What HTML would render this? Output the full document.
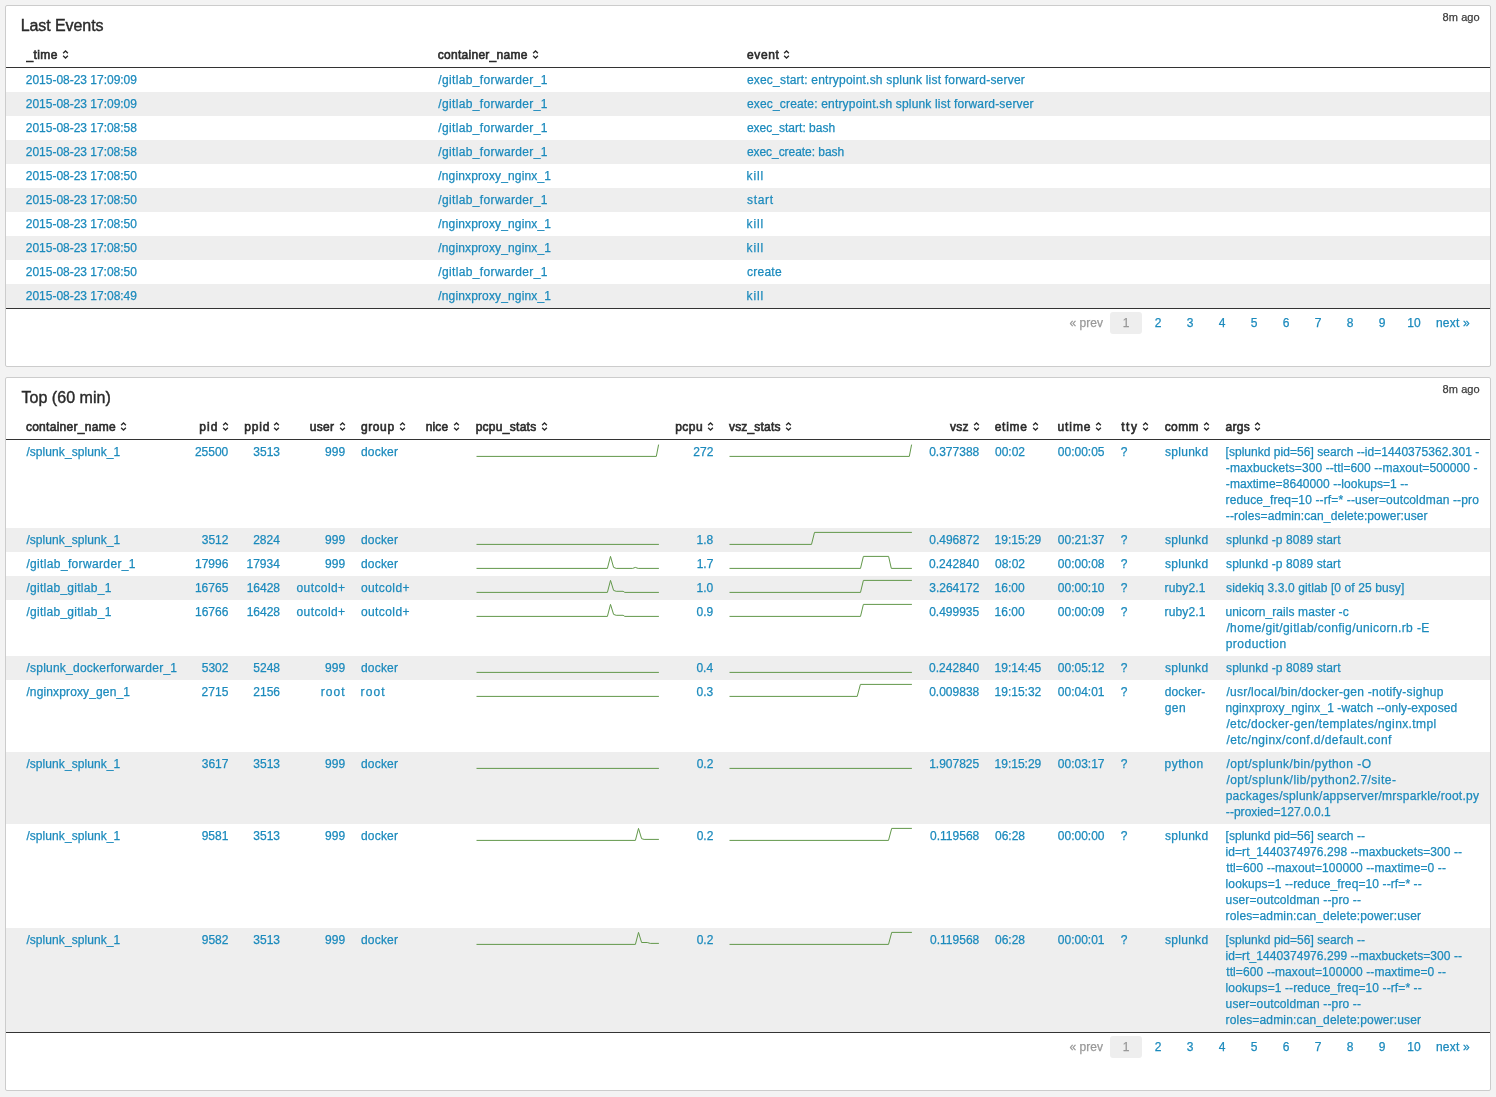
<!DOCTYPE html>
<html><head><meta charset="utf-8"><title>Docker</title>
<style>
html,body{margin:0;padding:0}
body{width:1496px;height:1097px;background:#f3f3f3;position:relative;overflow:hidden;font-family:"Liberation Sans",sans-serif;}
#pg{position:absolute;left:0;top:0;width:1496px;height:1097px;overflow:hidden;will-change:transform}
#pg div,#pg svg,#pg span{position:absolute}
.p{background:#fff;border:1px solid #cccccc;border-radius:2px;box-sizing:border-box}
span{white-space:pre;line-height:16px;height:16px;display:block;-webkit-text-stroke:0.25px}
.h{-webkit-text-stroke:0.6px #2b2b2b;color:#2b2b2b !important}
.t{-webkit-text-stroke:0.4px #2a2a2a;color:#2a2a2a !important}
#sp path{fill:none;stroke:#62984a;stroke-width:1}
</style></head><body><div id="pg">
<div class="p" style="left:5px;top:5px;width:1486px;height:362px"></div>
<div class="p" style="left:5px;top:377px;width:1486px;height:714px"></div>
<div style="left:6px;top:92px;width:1484px;height:24px;background:#eeeeee;"></div>
<div style="left:6px;top:140px;width:1484px;height:24px;background:#eeeeee;"></div>
<div style="left:6px;top:188px;width:1484px;height:24px;background:#eeeeee;"></div>
<div style="left:6px;top:236px;width:1484px;height:24px;background:#eeeeee;"></div>
<div style="left:6px;top:284px;width:1484px;height:24px;background:#eeeeee;"></div>
<div style="left:6px;top:67px;width:1484px;height:1px;background:#333;"></div>
<div style="left:6px;top:308px;width:1484px;height:1px;background:#333;"></div>
<div style="left:1110px;top:312px;width:32px;height:22px;background:#eeeeee;border-radius:3px"></div>
<div style="left:6px;top:439px;width:1484px;height:1px;background:#333;"></div>
<div style="left:6px;top:528px;width:1484px;height:24px;background:#eeeeee;"></div>
<div style="left:6px;top:576px;width:1484px;height:24px;background:#eeeeee;"></div>
<div style="left:6px;top:656px;width:1484px;height:24px;background:#eeeeee;"></div>
<div style="left:6px;top:752px;width:1484px;height:72px;background:#eeeeee;"></div>
<div style="left:6px;top:928px;width:1484px;height:104px;background:#eeeeee;"></div>
<div style="left:6px;top:1032px;width:1484px;height:1px;background:#333;"></div>
<div style="left:1110px;top:1036px;width:32px;height:22px;background:#eeeeee;border-radius:3px"></div>
<svg id="sp" style="left:0;top:0" width="1496" height="1097" viewBox="0 0 1496 1097"><path d="M476.5 456.4 L656.3 456.4 L658.6 444.6"/><path d="M729.5 456.4 L909.3 456.4 L911.6 444.6"/><path d="M476.5 544.4 L658.9 544.4"/><path d="M729.5 544.4 L811.5 544.4 L814.5 532.4 L911.9 532.4"/><path d="M476.5 568.4 L607.4 568.4 L610.5 556.4 L613.6 567.4 L616.2 568.4 L632.7 568.4 L635.3 567.4 L638.2 568.4 L658.9 568.4"/><path d="M729.5 568.4 L860.5 568.4 L863.4 556.4 L888.6 556.4 L891.3 568.4 L911.9 568.4"/><path d="M476.5 592.4 L607.4 592.4 L610.5 580.4 L613.6 590.4 L616.2 591.3 L623.1 591.3 L624.8 592.4 L658.9 592.4"/><path d="M729.5 592.4 L860.5 592.4 L863.4 580.4 L911.9 580.4"/><path d="M476.5 616.4 L607.4 616.4 L610.5 604.4 L613.6 614.4 L616.2 615.3 L623.1 615.3 L624.8 616.4 L658.9 616.4"/><path d="M729.5 616.4 L860.5 616.4 L863.4 604.4 L911.9 604.4"/><path d="M476.5 672.4 L658.9 672.4"/><path d="M729.5 672.4 L911.9 672.4"/><path d="M476.5 696.4 L658.9 696.4"/><path d="M729.5 696.4 L857.2 696.4 L860.4 684.4 L911.9 684.4"/><path d="M476.5 768.4 L658.9 768.4"/><path d="M729.5 768.4 L911.9 768.4"/><path d="M476.5 840.4 L635.4 840.4 L638.5 828.4 L641.6 838.7 L644.1 839.4 L658.9 839.4"/><path d="M729.5 840.4 L888.5 840.4 L891.7 828.4 L911.9 828.4"/><path d="M476.5 944.4 L635.4 944.4 L638.5 932.4 L641.6 942.5 L647.2 942.5 L650.3 943.4 L658.9 943.4"/><path d="M729.5 944.4 L888.5 944.4 L891.7 932.4 L911.9 932.4"/></svg>
<svg style="left:61.90px;top:49.00px" width="7" height="11" viewBox="0 0 7 11"><path d="M1.1 4.3L3.5 2.0L5.9 4.3M1.1 6.7L3.5 9.0L5.9 6.7" fill="none" stroke="#2b2b2b" stroke-width="1.3"/></svg>
<svg style="left:532.25px;top:49.00px" width="7" height="11" viewBox="0 0 7 11"><path d="M1.1 4.3L3.5 2.0L5.9 4.3M1.1 6.7L3.5 9.0L5.9 6.7" fill="none" stroke="#2b2b2b" stroke-width="1.3"/></svg>
<svg style="left:783.10px;top:49.00px" width="7" height="11" viewBox="0 0 7 11"><path d="M1.1 4.3L3.5 2.0L5.9 4.3M1.1 6.7L3.5 9.0L5.9 6.7" fill="none" stroke="#2b2b2b" stroke-width="1.3"/></svg>
<svg style="left:120.05px;top:421.00px" width="7" height="11" viewBox="0 0 7 11"><path d="M1.1 4.3L3.5 2.0L5.9 4.3M1.1 6.7L3.5 9.0L5.9 6.7" fill="none" stroke="#2b2b2b" stroke-width="1.3"/></svg>
<svg style="left:221.80px;top:421.00px" width="7" height="11" viewBox="0 0 7 11"><path d="M1.1 4.3L3.5 2.0L5.9 4.3M1.1 6.7L3.5 9.0L5.9 6.7" fill="none" stroke="#2b2b2b" stroke-width="1.3"/></svg>
<svg style="left:273.45px;top:421.00px" width="7" height="11" viewBox="0 0 7 11"><path d="M1.1 4.3L3.5 2.0L5.9 4.3M1.1 6.7L3.5 9.0L5.9 6.7" fill="none" stroke="#2b2b2b" stroke-width="1.3"/></svg>
<svg style="left:338.60px;top:421.00px" width="7" height="11" viewBox="0 0 7 11"><path d="M1.1 4.3L3.5 2.0L5.9 4.3M1.1 6.7L3.5 9.0L5.9 6.7" fill="none" stroke="#2b2b2b" stroke-width="1.3"/></svg>
<svg style="left:398.50px;top:421.00px" width="7" height="11" viewBox="0 0 7 11"><path d="M1.1 4.3L3.5 2.0L5.9 4.3M1.1 6.7L3.5 9.0L5.9 6.7" fill="none" stroke="#2b2b2b" stroke-width="1.3"/></svg>
<svg style="left:453.00px;top:421.00px" width="7" height="11" viewBox="0 0 7 11"><path d="M1.1 4.3L3.5 2.0L5.9 4.3M1.1 6.7L3.5 9.0L5.9 6.7" fill="none" stroke="#2b2b2b" stroke-width="1.3"/></svg>
<svg style="left:541.30px;top:421.00px" width="7" height="11" viewBox="0 0 7 11"><path d="M1.1 4.3L3.5 2.0L5.9 4.3M1.1 6.7L3.5 9.0L5.9 6.7" fill="none" stroke="#2b2b2b" stroke-width="1.3"/></svg>
<svg style="left:706.75px;top:421.00px" width="7" height="11" viewBox="0 0 7 11"><path d="M1.1 4.3L3.5 2.0L5.9 4.3M1.1 6.7L3.5 9.0L5.9 6.7" fill="none" stroke="#2b2b2b" stroke-width="1.3"/></svg>
<svg style="left:784.95px;top:421.00px" width="7" height="11" viewBox="0 0 7 11"><path d="M1.1 4.3L3.5 2.0L5.9 4.3M1.1 6.7L3.5 9.0L5.9 6.7" fill="none" stroke="#2b2b2b" stroke-width="1.3"/></svg>
<svg style="left:972.70px;top:421.00px" width="7" height="11" viewBox="0 0 7 11"><path d="M1.1 4.3L3.5 2.0L5.9 4.3M1.1 6.7L3.5 9.0L5.9 6.7" fill="none" stroke="#2b2b2b" stroke-width="1.3"/></svg>
<svg style="left:1032.25px;top:421.00px" width="7" height="11" viewBox="0 0 7 11"><path d="M1.1 4.3L3.5 2.0L5.9 4.3M1.1 6.7L3.5 9.0L5.9 6.7" fill="none" stroke="#2b2b2b" stroke-width="1.3"/></svg>
<svg style="left:1095.25px;top:421.00px" width="7" height="11" viewBox="0 0 7 11"><path d="M1.1 4.3L3.5 2.0L5.9 4.3M1.1 6.7L3.5 9.0L5.9 6.7" fill="none" stroke="#2b2b2b" stroke-width="1.3"/></svg>
<svg style="left:1141.50px;top:421.00px" width="7" height="11" viewBox="0 0 7 11"><path d="M1.1 4.3L3.5 2.0L5.9 4.3M1.1 6.7L3.5 9.0L5.9 6.7" fill="none" stroke="#2b2b2b" stroke-width="1.3"/></svg>
<svg style="left:1203.20px;top:421.00px" width="7" height="11" viewBox="0 0 7 11"><path d="M1.1 4.3L3.5 2.0L5.9 4.3M1.1 6.7L3.5 9.0L5.9 6.7" fill="none" stroke="#2b2b2b" stroke-width="1.3"/></svg>
<svg style="left:1254.00px;top:421.00px" width="7" height="11" viewBox="0 0 7 11"><path d="M1.1 4.3L3.5 2.0L5.9 4.3M1.1 6.7L3.5 9.0L5.9 6.7" fill="none" stroke="#2b2b2b" stroke-width="1.3"/></svg>
<span class="t" style="top:17.50px;font-size:16px;color:#333;letter-spacing:-0.072px;left:20.69px;">Last Events</span>
<span style="top:9.00px;font-size:11px;color:#3c3c3c;letter-spacing:0.087px;right:16.25px;">8m ago</span>
<span class="h" style="top:47.00px;font-size:12px;color:#333;letter-spacing:0.402px;left:26.48px;">_time</span>
<span class="h" style="top:47.00px;font-size:12px;color:#333;letter-spacing:0.275px;left:437.79px;">container_name</span>
<span class="h" style="top:47.00px;font-size:12px;color:#333;letter-spacing:0.585px;left:747.09px;">event</span>
<span style="top:72.00px;font-size:12px;color:#1b8abd;letter-spacing:-0.015px;left:25.80px;">2015-08-23 17:09:09</span>
<span style="top:72.00px;font-size:12px;color:#1b8abd;letter-spacing:0.353px;left:438.30px;">/gitlab_forwarder_1</span>
<span style="top:72.00px;font-size:12px;color:#1b8abd;letter-spacing:0.205px;left:746.89px;">exec_start: entrypoint.sh splunk list forward-server</span>
<span style="top:96.00px;font-size:12px;color:#1b8abd;letter-spacing:-0.015px;left:25.80px;">2015-08-23 17:09:09</span>
<span style="top:96.00px;font-size:12px;color:#1b8abd;letter-spacing:0.353px;left:438.30px;">/gitlab_forwarder_1</span>
<span style="top:96.00px;font-size:12px;color:#1b8abd;letter-spacing:0.178px;left:746.89px;">exec_create: entrypoint.sh splunk list forward-server</span>
<span style="top:120.00px;font-size:12px;color:#1b8abd;letter-spacing:-0.017px;left:25.80px;">2015-08-23 17:08:58</span>
<span style="top:120.00px;font-size:12px;color:#1b8abd;letter-spacing:0.353px;left:438.30px;">/gitlab_forwarder_1</span>
<span style="top:120.00px;font-size:12px;color:#1b8abd;letter-spacing:0.015px;left:746.89px;">exec_start: bash</span>
<span style="top:144.00px;font-size:12px;color:#1b8abd;letter-spacing:-0.017px;left:25.80px;">2015-08-23 17:08:58</span>
<span style="top:144.00px;font-size:12px;color:#1b8abd;letter-spacing:0.353px;left:438.30px;">/gitlab_forwarder_1</span>
<span style="top:144.00px;font-size:12px;color:#1b8abd;letter-spacing:-0.048px;left:746.89px;">exec_create: bash</span>
<span style="top:168.00px;font-size:12px;color:#1b8abd;letter-spacing:-0.020px;left:25.80px;">2015-08-23 17:08:50</span>
<span style="top:168.00px;font-size:12px;color:#1b8abd;letter-spacing:0.139px;left:438.30px;">/nginxproxy_nginx_1</span>
<span style="top:168.00px;font-size:12px;color:#1b8abd;letter-spacing:0.870px;left:746.59px;">kill</span>
<span style="top:192.00px;font-size:12px;color:#1b8abd;letter-spacing:-0.020px;left:25.80px;">2015-08-23 17:08:50</span>
<span style="top:192.00px;font-size:12px;color:#1b8abd;letter-spacing:0.353px;left:438.30px;">/gitlab_forwarder_1</span>
<span style="top:192.00px;font-size:12px;color:#1b8abd;letter-spacing:0.670px;left:747.07px;">start</span>
<span style="top:216.00px;font-size:12px;color:#1b8abd;letter-spacing:-0.020px;left:25.80px;">2015-08-23 17:08:50</span>
<span style="top:216.00px;font-size:12px;color:#1b8abd;letter-spacing:0.139px;left:438.30px;">/nginxproxy_nginx_1</span>
<span style="top:216.00px;font-size:12px;color:#1b8abd;letter-spacing:0.870px;left:746.59px;">kill</span>
<span style="top:240.00px;font-size:12px;color:#1b8abd;letter-spacing:-0.020px;left:25.80px;">2015-08-23 17:08:50</span>
<span style="top:240.00px;font-size:12px;color:#1b8abd;letter-spacing:0.139px;left:438.30px;">/nginxproxy_nginx_1</span>
<span style="top:240.00px;font-size:12px;color:#1b8abd;letter-spacing:0.870px;left:746.59px;">kill</span>
<span style="top:264.00px;font-size:12px;color:#1b8abd;letter-spacing:-0.020px;left:25.80px;">2015-08-23 17:08:50</span>
<span style="top:264.00px;font-size:12px;color:#1b8abd;letter-spacing:0.353px;left:438.30px;">/gitlab_forwarder_1</span>
<span style="top:264.00px;font-size:12px;color:#1b8abd;letter-spacing:0.277px;left:746.89px;">create</span>
<span style="top:288.00px;font-size:12px;color:#1b8abd;letter-spacing:-0.015px;left:25.80px;">2015-08-23 17:08:49</span>
<span style="top:288.00px;font-size:12px;color:#1b8abd;letter-spacing:0.139px;left:438.30px;">/nginxproxy_nginx_1</span>
<span style="top:288.00px;font-size:12px;color:#1b8abd;letter-spacing:0.870px;left:746.59px;">kill</span>
<span style="top:315.00px;font-size:12px;color:#999;letter-spacing:0.034px;left:1069.51px;">« prev</span>
<span style="top:315.00px;font-size:12px;color:#999;left:1076.00px;width:100px;text-align:center;">1</span>
<span style="top:315.00px;font-size:12px;color:#1b8abd;left:1108.00px;width:100px;text-align:center;">2</span>
<span style="top:315.00px;font-size:12px;color:#1b8abd;left:1140.00px;width:100px;text-align:center;">3</span>
<span style="top:315.00px;font-size:12px;color:#1b8abd;left:1172.00px;width:100px;text-align:center;">4</span>
<span style="top:315.00px;font-size:12px;color:#1b8abd;left:1204.00px;width:100px;text-align:center;">5</span>
<span style="top:315.00px;font-size:12px;color:#1b8abd;left:1236.00px;width:100px;text-align:center;">6</span>
<span style="top:315.00px;font-size:12px;color:#1b8abd;left:1268.00px;width:100px;text-align:center;">7</span>
<span style="top:315.00px;font-size:12px;color:#1b8abd;left:1300.00px;width:100px;text-align:center;">8</span>
<span style="top:315.00px;font-size:12px;color:#1b8abd;left:1332.00px;width:100px;text-align:center;">9</span>
<span style="top:315.00px;font-size:12px;color:#1b8abd;left:1364.00px;width:100px;text-align:center;">10</span>
<span style="top:315.00px;font-size:12px;color:#1b8abd;letter-spacing:0.216px;left:1435.90px;">next »</span>
<span class="t" style="top:389.50px;font-size:16px;color:#333;letter-spacing:0.039px;left:21.44px;">Top (60 min)</span>
<span style="top:381.00px;font-size:11px;color:#3c3c3c;letter-spacing:0.087px;right:16.25px;">8m ago</span>
<span class="h" style="top:419.00px;font-size:12px;color:#333;letter-spacing:0.283px;left:25.89px;">container_name</span>
<span class="h" style="top:419.00px;font-size:12px;color:#333;letter-spacing:1.066px;right:1277.46px;">pid</span>
<span class="h" style="top:419.00px;font-size:12px;color:#333;letter-spacing:0.820px;right:1225.71px;">ppid</span>
<span class="h" style="top:419.00px;font-size:12px;color:#333;letter-spacing:0.245px;right:1161.86px;">user</span>
<span class="h" style="top:419.00px;font-size:12px;color:#333;letter-spacing:0.626px;left:360.90px;">group</span>
<span class="h" style="top:419.00px;font-size:12px;color:#333;letter-spacing:0.171px;left:425.70px;">nice</span>
<span class="h" style="top:419.00px;font-size:12px;color:#333;letter-spacing:0.284px;left:475.63px;">pcpu_stats</span>
<span class="h" style="top:419.00px;font-size:12px;color:#333;letter-spacing:0.513px;right:792.79px;">pcpu</span>
<span class="h" style="top:419.00px;font-size:12px;color:#333;letter-spacing:0.182px;left:728.96px;">vsz_stats</span>
<span class="h" style="top:419.00px;font-size:12px;color:#333;letter-spacing:0.219px;right:527.28px;">vsz</span>
<span class="h" style="top:419.00px;font-size:12px;color:#333;letter-spacing:0.750px;left:994.69px;">etime</span>
<span class="h" style="top:419.00px;font-size:12px;color:#333;letter-spacing:0.942px;left:1057.42px;">utime</span>
<span class="h" style="top:419.00px;font-size:12px;color:#333;letter-spacing:1.567px;left:1121.22px;">tty</span>
<span class="h" style="top:419.00px;font-size:12px;color:#333;letter-spacing:0.343px;left:1164.79px;">comm</span>
<span class="h" style="top:419.00px;font-size:12px;color:#333;letter-spacing:0.333px;left:1225.39px;">args</span>
<span style="top:444.00px;font-size:12px;color:#1b8abd;letter-spacing:0.070px;left:26.40px;">/splunk_splunk_1</span>
<span style="top:444.00px;font-size:12px;color:#1b8abd;right:1267.73px;">25500</span>
<span style="top:444.00px;font-size:12px;color:#1b8abd;right:1215.97px;">3513</span>
<span style="top:444.00px;font-size:12px;color:#1b8abd;right:1150.93px;">999</span>
<span style="top:444.00px;font-size:12px;color:#1b8abd;letter-spacing:0.214px;left:360.90px;">docker</span>
<span style="top:444.00px;font-size:12px;color:#1b8abd;right:782.70px;">272</span>
<span style="top:444.00px;font-size:12px;color:#1b8abd;right:516.78px;">0.377388</span>
<span style="top:444.00px;font-size:12px;color:#1b8abd;left:995.03px;">00:02</span>
<span style="top:444.00px;font-size:12px;color:#1b8abd;left:1057.83px;">00:00:05</span>
<span style="top:444.00px;font-size:12px;color:#1b8abd;left:1120.71px;">?</span>
<span style="top:444.00px;font-size:12px;color:#1b8abd;letter-spacing:0.289px;left:1164.97px;">splunkd</span>
<span style="top:444.00px;font-size:12px;color:#1b8abd;letter-spacing:0.034px;left:1225.54px;">[splunkd pid=56] search --id=1440375362.301 -</span>
<span style="top:460.00px;font-size:12px;color:#1b8abd;letter-spacing:0.089px;left:1225.87px;">-maxbuckets=300 --ttl=600 --maxout=500000 -</span>
<span style="top:476.00px;font-size:12px;color:#1b8abd;letter-spacing:0.053px;left:1225.87px;">-maxtime=8640000 --lookups=1 --</span>
<span style="top:492.00px;font-size:12px;color:#1b8abd;letter-spacing:0.140px;left:1225.60px;">reduce_freq=10 --rf=* --user=outcoldman --pro</span>
<span style="top:508.00px;font-size:12px;color:#1b8abd;letter-spacing:0.096px;left:1225.87px;">--roles=admin:can_delete:power:user</span>
<span style="top:532.00px;font-size:12px;color:#1b8abd;letter-spacing:0.070px;left:26.40px;">/splunk_splunk_1</span>
<span style="top:532.00px;font-size:12px;color:#1b8abd;right:1267.60px;">3512</span>
<span style="top:532.00px;font-size:12px;color:#1b8abd;right:1216.15px;">2824</span>
<span style="top:532.00px;font-size:12px;color:#1b8abd;right:1150.93px;">999</span>
<span style="top:532.00px;font-size:12px;color:#1b8abd;letter-spacing:0.214px;left:360.90px;">docker</span>
<span style="top:532.00px;font-size:12px;color:#1b8abd;right:782.78px;">1.8</span>
<span style="top:532.00px;font-size:12px;color:#1b8abd;right:516.70px;">0.496872</span>
<span style="top:532.00px;font-size:12px;color:#1b8abd;left:994.59px;">19:15:29</span>
<span style="top:532.00px;font-size:12px;color:#1b8abd;left:1057.83px;">00:21:37</span>
<span style="top:532.00px;font-size:12px;color:#1b8abd;left:1120.71px;">?</span>
<span style="top:532.00px;font-size:12px;color:#1b8abd;letter-spacing:0.289px;left:1164.97px;">splunkd</span>
<span style="top:532.00px;font-size:12px;color:#1b8abd;letter-spacing:0.117px;left:1226.07px;">splunkd -p 8089 start</span>
<span style="top:556.00px;font-size:12px;color:#1b8abd;letter-spacing:0.353px;left:26.40px;">/gitlab_forwarder_1</span>
<span style="top:556.00px;font-size:12px;color:#1b8abd;right:1267.67px;">17996</span>
<span style="top:556.00px;font-size:12px;color:#1b8abd;right:1216.15px;">17934</span>
<span style="top:556.00px;font-size:12px;color:#1b8abd;right:1150.93px;">999</span>
<span style="top:556.00px;font-size:12px;color:#1b8abd;letter-spacing:0.214px;left:360.90px;">docker</span>
<span style="top:556.00px;font-size:12px;color:#1b8abd;right:782.70px;">1.7</span>
<span style="top:556.00px;font-size:12px;color:#1b8abd;right:516.83px;">0.242840</span>
<span style="top:556.00px;font-size:12px;color:#1b8abd;left:995.03px;">08:02</span>
<span style="top:556.00px;font-size:12px;color:#1b8abd;left:1057.83px;">00:00:08</span>
<span style="top:556.00px;font-size:12px;color:#1b8abd;left:1120.71px;">?</span>
<span style="top:556.00px;font-size:12px;color:#1b8abd;letter-spacing:0.289px;left:1164.97px;">splunkd</span>
<span style="top:556.00px;font-size:12px;color:#1b8abd;letter-spacing:0.117px;left:1226.07px;">splunkd -p 8089 start</span>
<span style="top:580.00px;font-size:12px;color:#1b8abd;letter-spacing:0.283px;left:26.40px;">/gitlab_gitlab_1</span>
<span style="top:580.00px;font-size:12px;color:#1b8abd;right:1267.70px;">16765</span>
<span style="top:580.00px;font-size:12px;color:#1b8abd;right:1215.98px;">16428</span>
<span style="top:580.00px;font-size:12px;color:#1b8abd;letter-spacing:0.413px;right:1150.49px;">outcold+</span>
<span style="top:580.00px;font-size:12px;color:#1b8abd;letter-spacing:0.413px;left:360.90px;">outcold+</span>
<span style="top:580.00px;font-size:12px;color:#1b8abd;right:782.83px;">1.0</span>
<span style="top:580.00px;font-size:12px;color:#1b8abd;right:516.70px;">3.264172</span>
<span style="top:580.00px;font-size:12px;color:#1b8abd;left:994.59px;">16:00</span>
<span style="top:580.00px;font-size:12px;color:#1b8abd;left:1057.83px;">00:00:10</span>
<span style="top:580.00px;font-size:12px;color:#1b8abd;left:1120.71px;">?</span>
<span style="top:580.00px;font-size:12px;color:#1b8abd;letter-spacing:0.142px;left:1164.50px;">ruby2.1</span>
<span style="top:580.00px;font-size:12px;color:#1b8abd;letter-spacing:0.100px;left:1226.07px;">sidekiq 3.3.0 gitlab [0 of 25 busy]</span>
<span style="top:604.00px;font-size:12px;color:#1b8abd;letter-spacing:0.283px;left:26.40px;">/gitlab_gitlab_1</span>
<span style="top:604.00px;font-size:12px;color:#1b8abd;right:1267.67px;">16766</span>
<span style="top:604.00px;font-size:12px;color:#1b8abd;right:1215.98px;">16428</span>
<span style="top:604.00px;font-size:12px;color:#1b8abd;letter-spacing:0.413px;right:1150.49px;">outcold+</span>
<span style="top:604.00px;font-size:12px;color:#1b8abd;letter-spacing:0.413px;left:360.90px;">outcold+</span>
<span style="top:604.00px;font-size:12px;color:#1b8abd;right:782.73px;">0.9</span>
<span style="top:604.00px;font-size:12px;color:#1b8abd;right:516.80px;">0.499935</span>
<span style="top:604.00px;font-size:12px;color:#1b8abd;left:994.59px;">16:00</span>
<span style="top:604.00px;font-size:12px;color:#1b8abd;left:1057.83px;">00:00:09</span>
<span style="top:604.00px;font-size:12px;color:#1b8abd;left:1120.71px;">?</span>
<span style="top:604.00px;font-size:12px;color:#1b8abd;letter-spacing:0.142px;left:1164.50px;">ruby2.1</span>
<span style="top:604.00px;font-size:12px;color:#1b8abd;letter-spacing:0.078px;left:1225.62px;">unicorn_rails master -c</span>
<span style="top:620.00px;font-size:12px;color:#1b8abd;letter-spacing:0.393px;left:1226.40px;">/home/git/gitlab/config/unicorn.rb -E</span>
<span style="top:636.00px;font-size:12px;color:#1b8abd;letter-spacing:0.501px;left:1225.63px;">production</span>
<span style="top:660.00px;font-size:12px;color:#1b8abd;letter-spacing:0.243px;left:26.40px;">/splunk_dockerforwarder_1</span>
<span style="top:660.00px;font-size:12px;color:#1b8abd;right:1267.60px;">5302</span>
<span style="top:660.00px;font-size:12px;color:#1b8abd;right:1215.98px;">5248</span>
<span style="top:660.00px;font-size:12px;color:#1b8abd;right:1150.93px;">999</span>
<span style="top:660.00px;font-size:12px;color:#1b8abd;letter-spacing:0.214px;left:360.90px;">docker</span>
<span style="top:660.00px;font-size:12px;color:#1b8abd;right:782.95px;">0.4</span>
<span style="top:660.00px;font-size:12px;color:#1b8abd;right:516.83px;">0.242840</span>
<span style="top:660.00px;font-size:12px;color:#1b8abd;left:994.59px;">19:14:45</span>
<span style="top:660.00px;font-size:12px;color:#1b8abd;left:1057.83px;">00:05:12</span>
<span style="top:660.00px;font-size:12px;color:#1b8abd;left:1120.71px;">?</span>
<span style="top:660.00px;font-size:12px;color:#1b8abd;letter-spacing:0.289px;left:1164.97px;">splunkd</span>
<span style="top:660.00px;font-size:12px;color:#1b8abd;letter-spacing:0.117px;left:1226.07px;">splunkd -p 8089 start</span>
<span style="top:684.00px;font-size:12px;color:#1b8abd;letter-spacing:0.135px;left:26.40px;">/nginxproxy_gen_1</span>
<span style="top:684.00px;font-size:12px;color:#1b8abd;right:1267.70px;">2715</span>
<span style="top:684.00px;font-size:12px;color:#1b8abd;right:1215.97px;">2156</span>
<span style="top:684.00px;font-size:12px;color:#1b8abd;letter-spacing:1.066px;right:1150.35px;">root</span>
<span style="top:684.00px;font-size:12px;color:#1b8abd;letter-spacing:1.066px;left:360.60px;">root</span>
<span style="top:684.00px;font-size:12px;color:#1b8abd;right:782.77px;">0.3</span>
<span style="top:684.00px;font-size:12px;color:#1b8abd;right:516.78px;">0.009838</span>
<span style="top:684.00px;font-size:12px;color:#1b8abd;left:994.59px;">19:15:32</span>
<span style="top:684.00px;font-size:12px;color:#1b8abd;left:1057.83px;">00:04:01</span>
<span style="top:684.00px;font-size:12px;color:#1b8abd;left:1120.71px;">?</span>
<span style="top:684.00px;font-size:12px;color:#1b8abd;letter-spacing:0.087px;left:1164.80px;">docker-</span>
<span style="top:700.00px;font-size:12px;color:#1b8abd;letter-spacing:0.376px;left:1164.80px;">gen</span>
<span style="top:684.00px;font-size:12px;color:#1b8abd;letter-spacing:0.279px;left:1226.40px;">/usr/local/bin/docker-gen -notify-sighup</span>
<span style="top:700.00px;font-size:12px;color:#1b8abd;letter-spacing:0.088px;left:1225.60px;">nginxproxy_nginx_1 -watch --only-exposed</span>
<span style="top:716.00px;font-size:12px;color:#1b8abd;letter-spacing:0.391px;left:1226.40px;">/etc/docker-gen/templates/nginx.tmpl</span>
<span style="top:732.00px;font-size:12px;color:#1b8abd;letter-spacing:0.421px;left:1226.40px;">/etc/nginx/conf.d/default.conf</span>
<span style="top:756.00px;font-size:12px;color:#1b8abd;letter-spacing:0.070px;left:26.40px;">/splunk_splunk_1</span>
<span style="top:756.00px;font-size:12px;color:#1b8abd;right:1267.60px;">3617</span>
<span style="top:756.00px;font-size:12px;color:#1b8abd;right:1215.97px;">3513</span>
<span style="top:756.00px;font-size:12px;color:#1b8abd;right:1150.93px;">999</span>
<span style="top:756.00px;font-size:12px;color:#1b8abd;letter-spacing:0.214px;left:360.90px;">docker</span>
<span style="top:756.00px;font-size:12px;color:#1b8abd;right:782.70px;">0.2</span>
<span style="top:756.00px;font-size:12px;color:#1b8abd;right:516.80px;">1.907825</span>
<span style="top:756.00px;font-size:12px;color:#1b8abd;left:994.59px;">19:15:29</span>
<span style="top:756.00px;font-size:12px;color:#1b8abd;left:1057.83px;">00:03:17</span>
<span style="top:756.00px;font-size:12px;color:#1b8abd;left:1120.71px;">?</span>
<span style="top:756.00px;font-size:12px;color:#1b8abd;letter-spacing:0.504px;left:1164.53px;">python</span>
<span style="top:756.00px;font-size:12px;color:#1b8abd;letter-spacing:0.465px;left:1226.40px;">/opt/splunk/bin/python -O</span>
<span style="top:772.00px;font-size:12px;color:#1b8abd;letter-spacing:0.470px;left:1226.40px;">/opt/splunk/lib/python2.7/site-</span>
<span style="top:788.00px;font-size:12px;color:#1b8abd;letter-spacing:0.268px;left:1225.63px;">packages/splunk/appserver/mrsparkle/root.py</span>
<span style="top:804.00px;font-size:12px;color:#1b8abd;letter-spacing:0.028px;left:1225.87px;">--proxied=127.0.0.1</span>
<span style="top:828.00px;font-size:12px;color:#1b8abd;letter-spacing:0.070px;left:26.40px;">/splunk_splunk_1</span>
<span style="top:828.00px;font-size:12px;color:#1b8abd;right:1267.61px;">9581</span>
<span style="top:828.00px;font-size:12px;color:#1b8abd;right:1215.97px;">3513</span>
<span style="top:828.00px;font-size:12px;color:#1b8abd;right:1150.93px;">999</span>
<span style="top:828.00px;font-size:12px;color:#1b8abd;letter-spacing:0.214px;left:360.90px;">docker</span>
<span style="top:828.00px;font-size:12px;color:#1b8abd;right:782.70px;">0.2</span>
<span style="top:828.00px;font-size:12px;color:#1b8abd;right:516.78px;">0.119568</span>
<span style="top:828.00px;font-size:12px;color:#1b8abd;left:995.03px;">06:28</span>
<span style="top:828.00px;font-size:12px;color:#1b8abd;left:1057.83px;">00:00:00</span>
<span style="top:828.00px;font-size:12px;color:#1b8abd;left:1120.71px;">?</span>
<span style="top:828.00px;font-size:12px;color:#1b8abd;letter-spacing:0.289px;left:1164.97px;">splunkd</span>
<span style="top:828.00px;font-size:12px;color:#1b8abd;letter-spacing:0.039px;left:1225.54px;">[splunkd pid=56] search --</span>
<span style="top:844.00px;font-size:12px;color:#1b8abd;letter-spacing:0.056px;left:1225.60px;">id=rt_1440374976.298 --maxbuckets=300 --</span>
<span style="top:860.00px;font-size:12px;color:#1b8abd;letter-spacing:0.107px;left:1226.22px;">ttl=600 --maxout=100000 --maxtime=0 --</span>
<span style="top:876.00px;font-size:12px;color:#1b8abd;letter-spacing:0.106px;left:1225.59px;">lookups=1 --reduce_freq=10 --rf=* --</span>
<span style="top:892.00px;font-size:12px;color:#1b8abd;letter-spacing:0.127px;left:1225.62px;">user=outcoldman --pro --</span>
<span style="top:908.00px;font-size:12px;color:#1b8abd;letter-spacing:0.154px;left:1225.60px;">roles=admin:can_delete:power:user</span>
<span style="top:932.00px;font-size:12px;color:#1b8abd;letter-spacing:0.070px;left:26.40px;">/splunk_splunk_1</span>
<span style="top:932.00px;font-size:12px;color:#1b8abd;right:1267.60px;">9582</span>
<span style="top:932.00px;font-size:12px;color:#1b8abd;right:1215.97px;">3513</span>
<span style="top:932.00px;font-size:12px;color:#1b8abd;right:1150.93px;">999</span>
<span style="top:932.00px;font-size:12px;color:#1b8abd;letter-spacing:0.214px;left:360.90px;">docker</span>
<span style="top:932.00px;font-size:12px;color:#1b8abd;right:782.70px;">0.2</span>
<span style="top:932.00px;font-size:12px;color:#1b8abd;right:516.78px;">0.119568</span>
<span style="top:932.00px;font-size:12px;color:#1b8abd;left:995.03px;">06:28</span>
<span style="top:932.00px;font-size:12px;color:#1b8abd;left:1057.83px;">00:00:01</span>
<span style="top:932.00px;font-size:12px;color:#1b8abd;left:1120.71px;">?</span>
<span style="top:932.00px;font-size:12px;color:#1b8abd;letter-spacing:0.289px;left:1164.97px;">splunkd</span>
<span style="top:932.00px;font-size:12px;color:#1b8abd;letter-spacing:0.039px;left:1225.54px;">[splunkd pid=56] search --</span>
<span style="top:948.00px;font-size:12px;color:#1b8abd;letter-spacing:0.056px;left:1225.60px;">id=rt_1440374976.299 --maxbuckets=300 --</span>
<span style="top:964.00px;font-size:12px;color:#1b8abd;letter-spacing:0.107px;left:1226.22px;">ttl=600 --maxout=100000 --maxtime=0 --</span>
<span style="top:980.00px;font-size:12px;color:#1b8abd;letter-spacing:0.106px;left:1225.59px;">lookups=1 --reduce_freq=10 --rf=* --</span>
<span style="top:996.00px;font-size:12px;color:#1b8abd;letter-spacing:0.127px;left:1225.62px;">user=outcoldman --pro --</span>
<span style="top:1012.00px;font-size:12px;color:#1b8abd;letter-spacing:0.154px;left:1225.60px;">roles=admin:can_delete:power:user</span>
<span style="top:1039.00px;font-size:12px;color:#999;letter-spacing:0.034px;left:1069.51px;">« prev</span>
<span style="top:1039.00px;font-size:12px;color:#999;left:1076.00px;width:100px;text-align:center;">1</span>
<span style="top:1039.00px;font-size:12px;color:#1b8abd;left:1108.00px;width:100px;text-align:center;">2</span>
<span style="top:1039.00px;font-size:12px;color:#1b8abd;left:1140.00px;width:100px;text-align:center;">3</span>
<span style="top:1039.00px;font-size:12px;color:#1b8abd;left:1172.00px;width:100px;text-align:center;">4</span>
<span style="top:1039.00px;font-size:12px;color:#1b8abd;left:1204.00px;width:100px;text-align:center;">5</span>
<span style="top:1039.00px;font-size:12px;color:#1b8abd;left:1236.00px;width:100px;text-align:center;">6</span>
<span style="top:1039.00px;font-size:12px;color:#1b8abd;left:1268.00px;width:100px;text-align:center;">7</span>
<span style="top:1039.00px;font-size:12px;color:#1b8abd;left:1300.00px;width:100px;text-align:center;">8</span>
<span style="top:1039.00px;font-size:12px;color:#1b8abd;left:1332.00px;width:100px;text-align:center;">9</span>
<span style="top:1039.00px;font-size:12px;color:#1b8abd;left:1364.00px;width:100px;text-align:center;">10</span>
<span style="top:1039.00px;font-size:12px;color:#1b8abd;letter-spacing:0.216px;left:1435.90px;">next »</span>
</div></body></html>
